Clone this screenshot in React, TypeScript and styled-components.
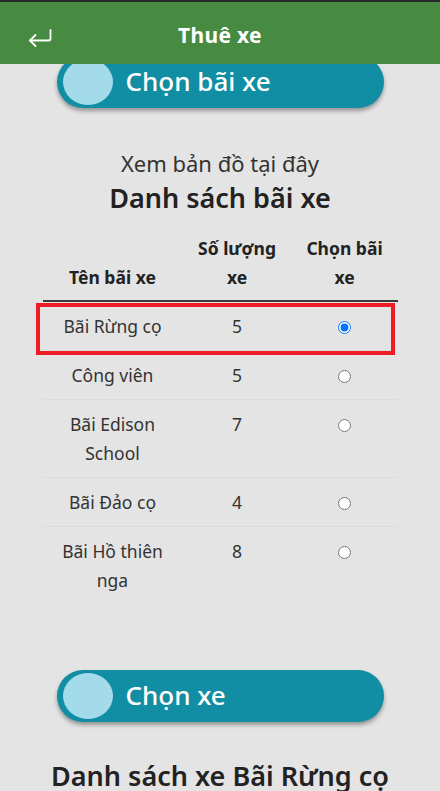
import React from "react";
import styled, { createGlobalStyle } from "styled-components";

const GlobalStyle = createGlobalStyle`
  html, body { margin: 0; padding: 0; }
  body {
    background: #e4e4e4;
    font-family: "Noto Sans", "Open Sans", sans-serif;
    color: #222;
  }
`;

const Page = styled.div`
  width: 440px;
  min-height: 791px;
  display: flex;
  flex-direction: column;
  align-items: center;
  overflow: hidden;
`;

const Header = styled.header`
  position: relative;
  z-index: 2;
  width: 100%;
  height: 62px;
  border-top: 2px solid #2b2b2b;
  background: #478a41;
  display: flex;
  align-items: center;
  justify-content: center;
`;

const BackButton = styled.button`
  position: absolute;
  left: 27px;
  top: 25px;
  width: 26px;
  height: 22px;
  padding: 0;
  border: 0;
  background: transparent;
  display: flex;
`;

const Title = styled.h1`
  margin: 0;
  font-family: "Noto Sans", sans-serif;
  font-weight: 700;
  font-size: 21px;
  letter-spacing: 0.3px;
  color: #fff;
  transform: translateY(2px);
`;

const Pill = styled.div<{ $top: number }>`
  position: relative;
  z-index: 1;
  margin-top: ${(p) => p.$top}px;
  width: 327px;
  height: 52px;
  border-radius: 26px;
  background: #118ea3;
  box-shadow: 0 3px 4px rgba(0, 0, 0, 0.35);
  display: flex;
  align-items: center;
  box-sizing: border-box;
  padding-left: 6px;
  gap: 13px;
`;

const Knob = styled.span`
  width: 50px;
  height: 46px;
  border-radius: 50%;
  background: #a3dbeb;
  flex: none;
`;

const PillLabel = styled.span`
  font-family: "Noto Sans", sans-serif;
  font-weight: 500;
  font-size: 26px;
  color: #fff;
  transform: translateY(-1px);
`;

const SubHeading = styled.div`
  margin-top: 40px;
  font-size: 22px;
  line-height: 30px;
  font-weight: 400;
  color: #333;
`;

const Heading = styled.h2`
  margin: 2px 0 0;
  font-size: 27px;
  line-height: 36px;
  font-weight: 600;
  color: #222;
`;

const TableWrap = styled.div`
  position: relative;
  margin-top: 10px;
  width: 355px;
`;

const Table = styled.table`
  width: 355px;
  border-collapse: collapse;
  table-layout: fixed;
  text-align: center;
`;

const HeadCell = styled.th<{ $w: number }>`
  box-sizing: border-box;
  width: ${(p) => p.$w}px;
  padding: 8px 6px 8px;
  font-weight: 700;
  font-size: 17.5px;
  line-height: 29px;
  vertical-align: bottom;
  color: #222;
  border-bottom: 2px solid #3a3a3a;
`;

const Row = styled.tr<{ $last?: boolean }>`
  border-bottom: ${(p) => (p.$last ? "none" : "1px solid #dadde0")};
`;

const Cell = styled.td`
  box-sizing: border-box;
  padding: 10px 8px 9px;
  font-size: 17.5px;
  line-height: 29px;
  vertical-align: top;
  color: #333;
`;

const Radio = styled.input`
  width: 13px;
  height: 13px;
  margin: 0;
  vertical-align: -1px;
`;

const Highlight = styled.div`
  position: absolute;
  left: -7px;
  top: 77px;
  width: 359px;
  height: 52px;
  box-sizing: border-box;
  border: 4px solid #ee1c24;
  pointer-events: none;
`;

const BottomHeading = styled.h2`
  margin: 36px 0 0;
  font-size: 27px;
  line-height: 36px;
  font-weight: 600;
  color: #222;
`;

const lots = [
  { name: "Bãi Rừng cọ", count: 5, selected: true },
  { name: "Công viên", count: 5 },
  { name: "Bãi Edison School", count: 7 },
  { name: "Bãi Đảo cọ", count: 4 },
  { name: "Bãi Hồ thiên nga", count: 8 },
];

export default function App() {
  return (
    <Page>
      <GlobalStyle />
      <Header>
        <BackButton aria-label="back">
          <svg width="26" height="22" viewBox="0 0 26 22" fill="none" stroke="#fff" strokeWidth="1.8" strokeLinecap="round" strokeLinejoin="round">
            <path d="M23.5 3v8.5a2 2 0 0 1-2 2H3" />
            <polyline points="8.5 8 3 13.5 8.5 19" />
          </svg>
        </BackButton>
        <Title>Thuê xe</Title>
      </Header>

      <Pill $top={-8}>
        <Knob />
        <PillLabel>Chọn bãi xe</PillLabel>
      </Pill>

      <SubHeading>Xem bản đồ tại đây</SubHeading>
      <Heading>Danh sách bãi xe</Heading>

      <TableWrap>
        <Table>
          <thead>
            <tr>
              <HeadCell $w={140}>Tên bãi xe</HeadCell>
              <HeadCell $w={109}>Số lượng xe</HeadCell>
              <HeadCell $w={106}>Chọn bãi xe</HeadCell>
            </tr>
          </thead>
          <tbody>
            {lots.map((l, i) => (
              <Row key={l.name} $last={i === lots.length - 1}>
                <Cell>{l.name}</Cell>
                <Cell>{l.count}</Cell>
                <Cell>
                  <Radio type="radio" name="lot" defaultChecked={!!l.selected} />
                </Cell>
              </Row>
            ))}
          </tbody>
        </Table>
        <Highlight />
      </TableWrap>

      <Pill $top={66}>
        <Knob />
        <PillLabel>Chọn xe</PillLabel>
      </Pill>

      <BottomHeading>Danh sách xe Bãi Rừng cọ</BottomHeading>
    </Page>
  );
}
